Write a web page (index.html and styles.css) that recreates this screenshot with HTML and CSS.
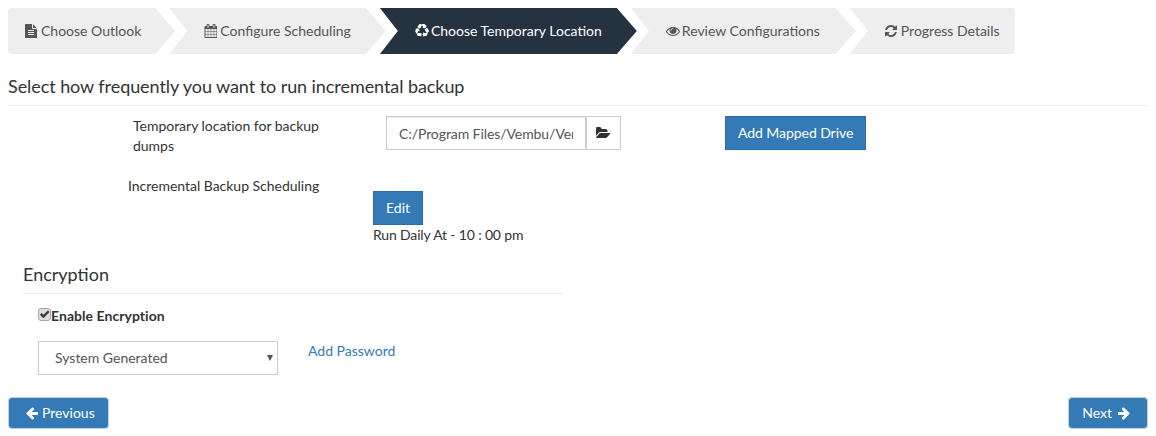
FILE: index.html
```html
<!DOCTYPE html>
<html lang="en">
<head>
<meta charset="utf-8">
<title>Choose Temporary Location</title>
<link rel="stylesheet" href="styles.css">
</head>
<body>
<ol class="steps">
  <li class="step step-first"><svg class="ico ico-file" viewBox="128 0 1536 1792"><path d="M1596 476q14 14 28 36h-472v-472q22 14 36 28zm-476 164h544v1056q0 40-28 68t-68 28h-1344q-40 0-68-28t-28-68v-1600q0-40 28-68t68-28h800v544q0 40 28 68t68 28zm160 736v-64q0-14-9-23t-23-9h-704q-14 0-23 9t-9 23v64q0 14 9 23t23 9h704q14 0 23-9t9-23zm0-256v-64q0-14-9-23t-23-9h-704q-14 0-23 9t-9 23v64q0 14 9 23t23 9h704q14 0 23-9t9-23zm0-256v-64q0-14-9-23t-23-9h-704q-14 0-23 9t-9 23v64q0 14 9 23t23 9h704q14 0 23-9t9-23z"/></svg>Choose Outlook</li>
  <li class="step"><svg class="ico ico-cal" viewBox="0 0 1664 1792"><path d="M192 1664h288v-288h-288v288zm352 0h320v-288h-320v288zm-352-352h288v-320h-288v320zm352 0h320v-320h-320v320zm-352-384h288v-288h-288v288zm736 736h320v-288h-320v288zm-384-736h320v-288h-320v288zm768 736h288v-288h-288v288zm-384-352h320v-320h-320v320zm-352-864v-288q0-13-9.5-22.5t-22.5-9.5h-64q-13 0-22.5 9.5t-9.5 22.5v288q0 13 9.5 22.5t22.5 9.5h64q13 0 22.5-9.5t9.5-22.5zm736 864h288v-320h-288v320zm-384-384h320v-288h-320v288zm384 0h288v-288h-288v288zm32-480v-288q0-13-9.5-22.5t-22.5-9.5h-64q-13 0-22.5 9.5t-9.5 22.5v288q0 13 9.5 22.5t22.5 9.5h64q13 0 22.5-9.5t9.5-22.5zm384-64v1280q0 52-38 90t-90 38h-1408q-52 0-90-38t-38-90v-1280q0-52 38-90t90-38h128v-96q0-66 47-113t113-47h64q66 0 113 47t47 113v96h384v-96q0-66 47-113t113-47h64q66 0 113 47t47 113v96h128q52 0 90 38t38 90z"/></svg>Configure Scheduling</li>
  <li class="step step-active"><svg class="ico ico-rec" viewBox="0 0 1792 1792"><path d="M836 1169l-15 368-2 22-420-29q-36-3-67-31.5t-47-65.5q-11-27-14.5-55t4-65 12-55 21.5-64 19-53q78 12 509 28zm-387-586l180 379-147-92q-63 72-111.5 144.5t-72.5 125-39.5 94.5-18.5 63l-4 21-190-357q-17-26-18-56t6-47l8-18q35-63 114-188l-140-86zm1231 517l-188 359q-12 29-36.5 46.5t-43.5 20.5l-18 4q-71 7-219 12l8 164-230-367 211-362 7 173q170 16 283 5t170-33zm-785-924q-47 63-265 435l-317-187-19-12 225-356q20-31 60-45t80-10q24 2 48.5 12t42 21 41.5 33 36 34.5 36 39.5 32 35zm655 307l212 363q18 37 12.5 76t-27.5 74q-13 20-33 37t-38 28-48.5 22-47 16-51.5 14-46 12q-34-72-265-436l313-195zm-143-226l142-83-220 373-419-20 151-86q-34-89-75-166t-75.5-123.5-64.5-80-47-46.5l-17-13 405 1q31-3 58 10.5t39 28.5l11 15q39 61 112 190z"/></svg>Choose Temporary Location</li>
  <li class="step step-review"><svg class="ico ico-eye" viewBox="0 0 1792 1792"><path d="M1664 960q-152-236-381-353 61 104 61 225 0 185-131.5 316.5t-316.5 131.5-316.5-131.5-131.5-316.5q0-121 61-225-229 117-381 353 133 205 333.5 326.5t434.5 121.5 434.5-121.5 333.5-326.5zm-720-384q0-20-14-34t-34-14q-125 0-214.5 89.5t-89.5 214.5q0 20 14 34t34 14 34-14 14-34q0-86 61-147t147-61q20 0 34-14t14-34zm848 384q0 34-20 69-140 230-376.5 368.5t-499.5 138.5-499.5-139-376.5-368q-20-35-20-69t20-69q140-229 376.5-368t499.5-139 499.5 139 376.5 368q20 35 20 69z"/></svg>Review Configurations</li>
  <li class="step step-last"><svg class="ico ico-ref" viewBox="128 0 1536 1792"><path d="M1639 1056q0 5-1 7-64 268-268 434.5t-478 166.5q-146 0-282.5-55t-243.5-157l-129 129q-19 19-45 19t-45-19-19-45v-448q0-26 19-45t45-19h448q26 0 45 19t19 45-19 45l-137 137q71 66 161 102t187 36q134 0 250-65t186-179q11-17 53-117 8-23 30-23h192q13 0 22.5 9.5t9.5 22.5zm25-800v448q0 26-19 45t-45 19h-448q-26 0-45-19t-19-45 19-45l138-138q-148-137-349-137-134 0-250 65t-186 179q-11 17-53 117-8 23-30 23h-199q-13 0-22.5-9.5t-9.5-22.5v-7q65-268 270-434.5t480-166.5q146 0 284 55.5t245 156.5l130-129q19-19 45-19t45 19 19 45z"/></svg>Progress Details</li>
</ol>

<h2 class="page-title">Select how frequently you want to run incremental backup</h2>

<div class="row row-location">
  <label class="label-location">Temporary location for backup dumps</label>
  <div class="input-group">
    <input class="text-input" type="text" value="C:/Program Files/Vembu/Vembu BDR/dumps">
    <button class="icon-btn" type="button"><svg class="ico-folder" viewBox="0 0 1920 1792"><path d="M1815 952q0 31-31 66l-336 396q-43 51-120.5 86.5t-143.5 35.5h-1088q-34 0-60.5-13t-26.5-43q0-31 31-66l336-396q43-51 120.5-86.5t143.5-35.5h1088q34 0 60.5 13t26.5 43zm-343-344v160h-832q-94 0-197 47.5t-164 119.5l-337 396-5 6q0-4-.5-12.5t-.5-12.5v-960q0-92 66-158t158-66h320q92 0 158 66t66 158v32h544q92 0 158 66t66 158z"/></svg></button>
  </div>
  <button class="btn btn-square btn-mapped" type="button">Add Mapped Drive</button>
</div>

<div class="row row-schedule">
  <div class="label-schedule">Incremental Backup Scheduling</div>
  <div class="schedule-col">
    <button class="btn btn-square btn-edit" type="button">Edit</button>
    <div class="schedule-text">Run Daily At - 10 : 00 pm</div>
  </div>
</div>

<section class="encryption">
  <h3 class="section-title">Encryption</h3>
  <label class="check-row">
    <span class="check-wrap"><input class="check" type="checkbox" checked disabled><svg class="check-mark" viewBox="0 0 12 12"><path d="M1.8 6.2 3.4 4.7 5 6.3 9.2 2.2 10.6 3.6 5 9.4z"/></svg></span>Enable Encryption
  </label>
  <div class="row row-password">
    <div class="select-wrap"><select class="select-input"><option>System Generated</option></select></div>
    <a class="link" href="#">Add Password</a>
  </div>
</section>

<div class="footer-nav">
  <button class="btn btn-round btn-prev" type="button"><svg class="ico-arrow" viewBox="0 0 1792 1792"><path d="M1664 896v128q0 53-32.5 90.5t-84.5 37.5h-704l293 294q38 36 38 90t-38 90l-75 76q-37 37-90 37-52 0-91-37l-651-652q-37-37-37-90 0-52 37-91l651-650q38-38 91-38 52 0 90 38l75 74q38 38 38 91t-38 91l-293 293h704q52 0 84.5 37.5t32.5 90.5z"/></svg>Previous</button>
  <button class="btn btn-round btn-next" type="button">Next<svg class="ico-arrow" viewBox="0 0 1792 1792"><path d="M1600 960q0 54-37 91l-651 651q-39 37-91 37-51 0-90-37l-75-75q-38-38-38-91t38-91l293-293h-704q-52 0-84.5-37.5t-32.5-90.5v-128q0-53 32.5-90.5t84.5-37.5h704l-293-294q-38-36-38-90t38-90l75-75q38-38 90-38 53 0 91 38l651 651q37 35 37 90z"/></svg></button>
</div>
</body>
</html>
```
FILE: styles.css
```css
* { box-sizing: border-box; }
html, body { background: #fff; }
body {
  margin: 8px;
  font-family: Lato, "Liberation Sans", sans-serif;
  font-size: 14px;
  line-height: 20px;
  color: #333;
}
.steps {
  display: flex;
  list-style: none;
  margin: 0;
  padding: 0;
  height: 46px;
}
.step {
  display: flex;
  align-items: center;
  height: 46px;
  margin-left: -6px;
  padding: 0 35px 0 35px;
  background: #eee;
  color: #555;
  white-space: nowrap;
  clip-path: polygon(0 0, calc(100% - 20px) 0, 100% 50%, calc(100% - 20px) 100%, 0 100%, 18px 50%);
}
.step-first {
  margin-left: 0;
  padding-left: 17px;
  padding-right: 34px;
  border-radius: 3px 0 0 3px;
  clip-path: polygon(0 0, calc(100% - 20px) 0, 100% 50%, calc(100% - 20px) 100%, 0 100%);
}
.step-last {
  padding-right: 15px;
  border-radius: 0 3px 3px 0;
  clip-path: polygon(0 0, 100% 0, 100% 100%, 0 100%, 18px 50%);
}
.step-active { padding-right: 35px; background: #253240; color: #fff; }
.step-review { padding-right: 36px; }
.ico { height: 14px; fill: currentColor; margin-right: 4px; flex: none; }
.ico-file, .ico-ref { width: 12px; }
.ico-cal { width: 13px; margin-right: 3px; }
.ico-rec, .ico-eye { width: 14px; margin-right: 2px; }
.page-title {
  margin: 22px 0 0;
  padding-bottom: 9px;
  font-size: 18px;
  font-weight: 400;
  line-height: 20px;
  letter-spacing: -0.07px;
  border-bottom: 1px solid #eee;
}
.row { display: flex; }
.row-location { margin-top: 10px; margin-left: 125px; }
.label-location { width: 253px; padding-right: 50px; letter-spacing: -0.02px; }
.input-group { display: flex; width: 235px; height: 34px; }
.text-input {
  width: 200px;
  height: 34px;
  padding: 6px 12px;
  border: 1px solid #ccc;
  border-radius: 0;
  font: inherit;
  letter-spacing: -0.08px;
  color: #555;
  outline: 0;
  box-shadow: inset 0 1px 1px rgba(0, 0, 0, .075);
}
.icon-btn {
  display: flex;
  align-items: center;
  justify-content: center;
  width: 35px;
  height: 34px;
  padding: 0;
  background: #fff;
  border: 1px solid #ccc;
}
.ico-folder { width: 15px; height: 14px; fill: #333; }
.btn {
  display: inline-flex;
  align-items: center;
  justify-content: center;
  background: #337ab7;
  border: 1px solid #2e6da4;
  color: #fff;
  font: inherit;
  white-space: nowrap;
}
.btn-square { height: 34px; padding: 6px 12px; border-radius: 0; }
.btn-mapped { margin-left: 104px; letter-spacing: -0.06px; }
.row-schedule { margin-top: 20px; margin-left: 120px; }
.label-schedule { width: 245px; letter-spacing: -0.02px; }
.schedule-col { padding-top: 15px; }
.schedule-text { letter-spacing: -0.16px; }
.btn-edit { display: flex; }
.encryption { margin: 19px 0 0 15px; width: 540px; }
.section-title {
  margin: 0;
  padding-bottom: 9px;
  font-size: 18px;
  font-weight: 400;
  line-height: 20px;
  border-bottom: 1px solid #eee;
}
.check-row {
  display: flex;
  align-items: center;
  margin: 12px 0 0 15px;
  font-weight: 700;
  letter-spacing: 0.05px;
}
.check-wrap {
  position: relative;
  width: 13px;
  height: 13px;
  top: -2px;
  flex: none;
}
.check {
  appearance: none;
  display: block;
  width: 13px;
  height: 13px;
  margin: 0;
  background: #dcdcdc;
  border: 1px solid #a8a8a8;
  border-radius: 3px;
}
.check-mark {
  position: absolute;
  left: 0;
  top: 0;
  width: 13px;
  height: 13px;
  fill: #3a3a3a;
}
.row-password { margin: 15px 0 0 15px; }
.select-wrap { position: relative; width: 240px; height: 34px; }
.select-wrap::after {
  content: "";
  position: absolute;
  right: 5px;
  top: 14px;
  border-style: solid;
  border-width: 6px 3.5px 0;
  border-color: #555 transparent transparent;
  pointer-events: none;
}
.select-input {
  appearance: none;
  display: block;
  width: 240px;
  height: 34px;
  padding: 0 12px 0 16px;
  background: #fff;
  border: 1px solid #ccc;
  border-radius: 0;
  font: inherit;
  color: #555;
}
.link { margin: 0 0 0 30px; color: #337ab7; text-decoration: none; }
.footer-nav {
  display: flex;
  justify-content: space-between;
  margin-top: 22px;
  width: 1140px;
}
.btn-round {
  height: 32px;
  background: #337ab7;
  border-color: #c3d0dc;
  border-radius: 4px;
}
.btn-prev { gap: 3px; padding: 0 13px 0 16px; }
.btn-next { gap: 5px; padding: 0 16px 0 13px; }
.ico-arrow { width: 14px; height: 14px; fill: #fff; flex: none; }
```
